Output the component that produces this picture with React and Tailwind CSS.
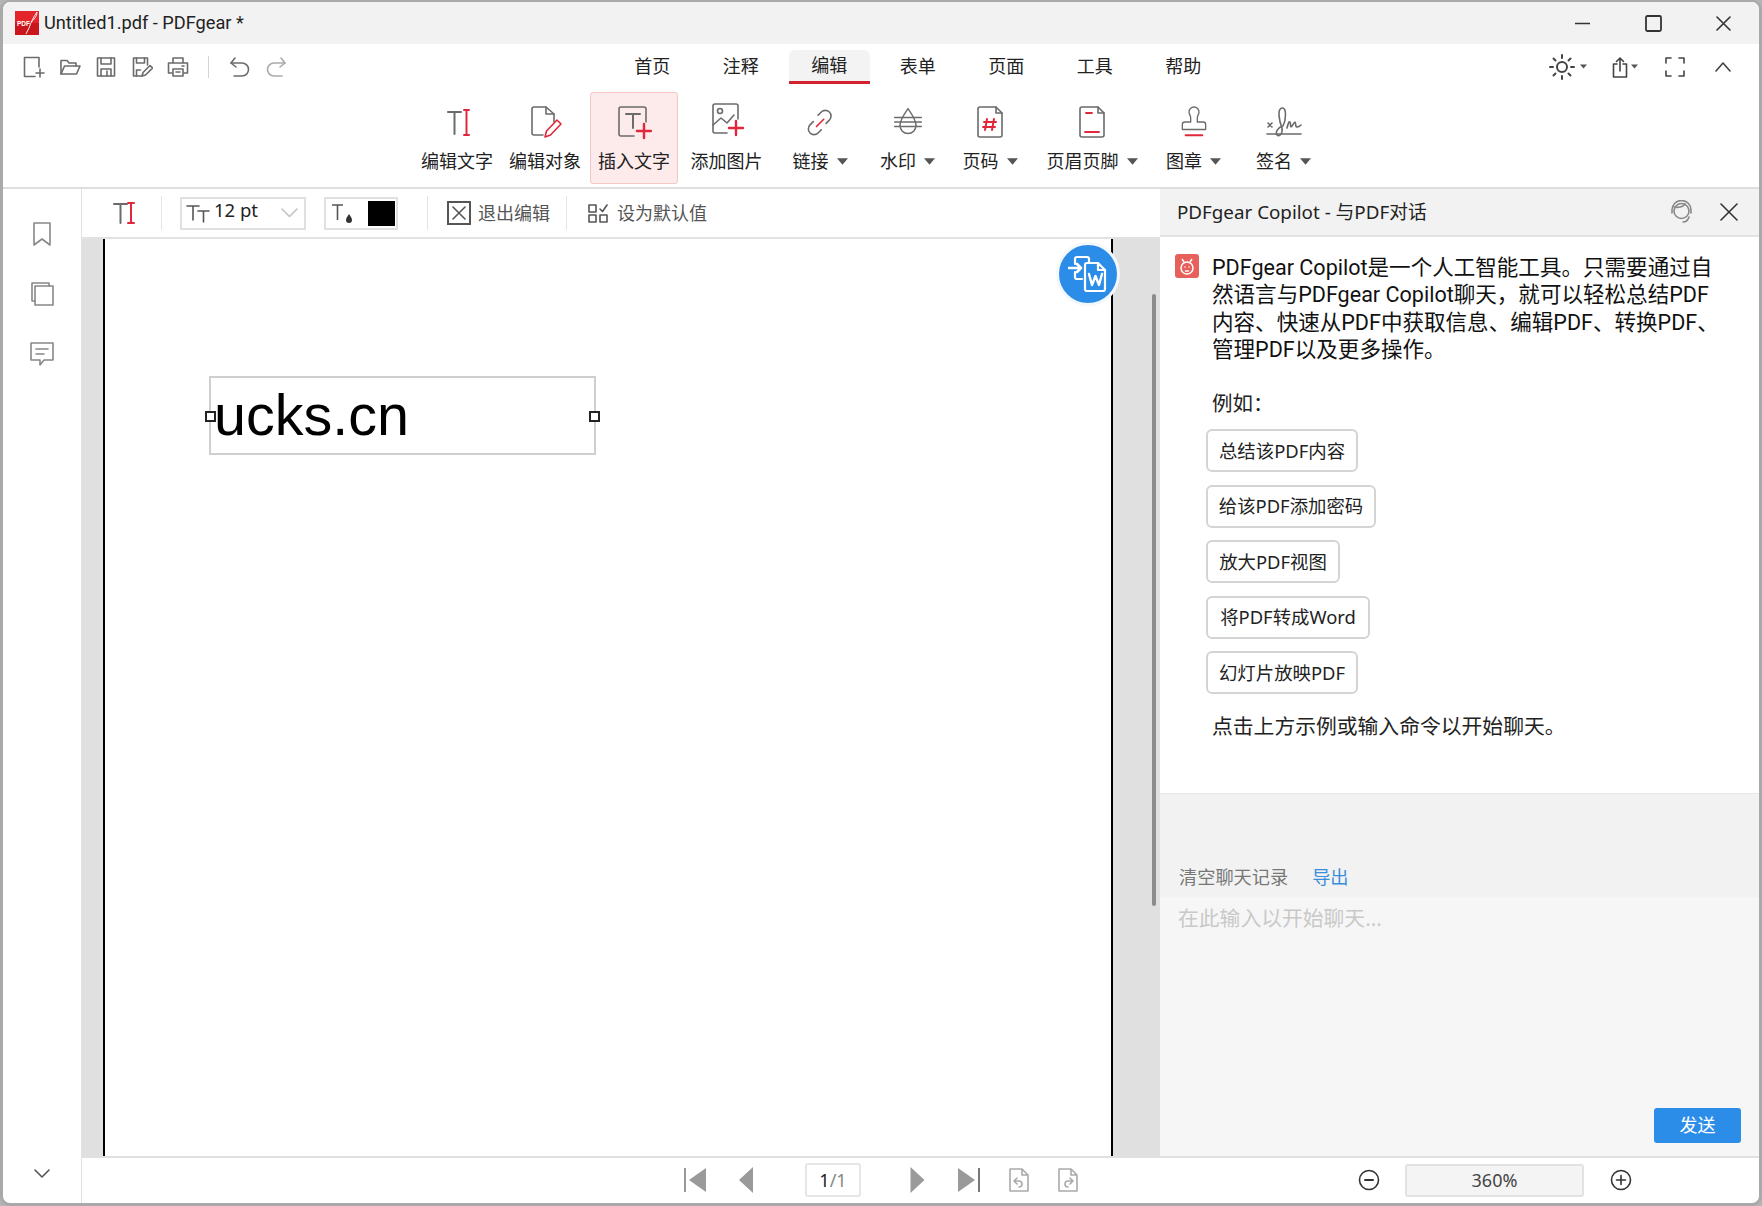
import { useState } from 'react'

const RED = '#e0283a'
const GRAY = '#6b6b6b'

const Svg = ({ w, h = w, vb, children, className = '' }) => (
  <svg width={w} height={h} viewBox={vb || `0 0 ${w} ${h}`} fill="none" stroke={GRAY} strokeWidth="1.6" strokeLinecap="round" strokeLinejoin="round" className={`shrink-0 ${className}`}>
    {children}
  </svg>
)

const Caret = ({ s = 'big' }) => (
  <svg width={s === 'big' ? 11 : 7} height={s === 'big' ? 7 : 5} viewBox="0 0 10 6" className="shrink-0">
    <path d="M0 0h10L5 6z" fill="#555" />
  </svg>
)

const Logo = () => (
  <svg width="24" height="24" viewBox="0 0 24 24" className="shrink-0">
    <rect width="24" height="24" fill="#e3242b" />
    <rect x="0" y="12" width="24" height="12" fill="#c9161d" />
    <text x="2" y="14.5" fontSize="6.5" fontWeight="700" fill="#fff" fontFamily="Liberation Sans, sans-serif">PDF</text>
    <path d="M22 1c-3 4-6 10-8 16l-3 6M22 1c0 4-3 8-6 10" stroke="#fff" strokeWidth="0.9" fill="none" />
  </svg>
)

const quick = [
  <Svg w={22} key="new"><path d="M16 11V1.5H1.5v19H12" /><path d="M17 13v8M13 17h8" /></Svg>,
  <Svg w={22} key="open"><path d="M2 18V4.5h6l2 2.5h7v3" /><path d="M2 18l3.5-8H21l-3.5 8z" /></Svg>,
  <Svg w={22} key="save"><path d="M2.500 2h17v18h-17z" /><path d="M6 2v6h10V2M6 20v-7h10v7M12 15v5" /></Svg>,
  <Svg w={22} key="saveas"><path d="M11 20H2.500V2h14v7" /><path d="M5.500 2v5h8V2M5.500 20v-6h4" /><path d="M11 20l1-3.500 7-7 2.500 2.500-7 7z" /></Svg>,
  <Svg w={22} key="print"><path d="M6 7V2h10v5M5 17H1.500V7h19v10H17" /><path d="M6 13h10v7H6zM9 16h4M15 10h2" /></Svg>,
]

const tabs = ['首页', '注释', '编辑', '表单', '页面', '工具', '帮助']

const ribbon = [
  { label: '编辑文字', w: 'w-[86px]', icon: <Svg w={36} vb="0 0 36 36"><path d="M9 8h13M15.500 8v22" strokeWidth="2" /><path d="M25 6h5M27.500 6v25M25 31h5" stroke={RED} strokeWidth="2" /></Svg> },
  { label: '编辑对象', w: 'w-[90px]', icon: <Svg w={36} vb="0 0 36 36"><path d="M16 31H7a2 2 0 0 1-2-2V5a2 2 0 0 1 2-2h12l8 7v8" /><path d="M19 3v7h8" /><path d="M18 33l1.500-6L30 16l4 4-10.500 11z" stroke={RED} /></Svg> },
  { label: '插入文字', w: 'w-[88px]', active: true, icon: <Svg w={36} vb="0 0 36 36"><path d="M18 32H5a2 2 0 0 1-2-2V5a2 2 0 0 1 2-2h23a2 2 0 0 1 2 2v13" /><path d="M10 10h14M17 10v14" strokeWidth="2" /><path d="M28 20v14M21 27h14" stroke={RED} strokeWidth="2.400" /></Svg> },
  { label: '添加图片', w: 'w-[97px]', up: true, icon: <Svg w={36} vb="0 0 36 36"><path d="M18 32H6a2 2 0 0 1-2-2V5a2 2 0 0 1 2-2h21a2 2 0 0 1 2 2v13" /><circle cx="11" cy="10" r="2.500" /><path d="M4 24l8-7 6 5 7-8" /><path d="M27 20v14M20 27h14" stroke={RED} strokeWidth="2.400" /></Svg> },
  { label: '链接', w: 'w-[90px]', caret: true, icon: <Svg w={29} vb="0 0 36 36"><path d="M15 9l4-4a6.500 6.500 0 0 1 10 10l-4 4" strokeWidth="2" /><path d="M19 27l-4 4A6.500 6.500 0 0 1 5 21l4-4" strokeWidth="2" /><path d="M13 23l9-9" stroke={RED} strokeWidth="2" /></Svg> },
  { label: '水印', w: 'w-[85px]', caret: true, icon: <Svg w={32} vb="0 0 36 36"><path d="M3 13h30M3 18h30M3 23h30" /><path d="M18 3c-4 6-9 12-9 19a9 9 0 0 0 18 0c0-7-5-13-9-19z" /></Svg> },
  { label: '页码', w: 'w-[80px]', caret: true, icon: <Svg w={36} vb="0 0 36 36"><path d="M24 3H8a2 2 0 0 0-2 2v26a2 2 0 0 0 2 2h20a2 2 0 0 0 2-2V9z" /><path d="M24 3v6h6" /><path d="M15 15l-2 11M22 15l-2 11M12 18h12M11 23h12" stroke={RED} strokeWidth="2" /></Svg> },
  { label: '页眉页脚', w: 'w-[124px]', caret: true, icon: <Svg w={36} vb="0 0 36 36"><path d="M24 3H8a2 2 0 0 0-2 2v26a2 2 0 0 0 2 2h20a2 2 0 0 0 2-2V9z" /><path d="M24 3v6h6" /><path d="M12 9h6M11 28h14" stroke={RED} strokeWidth="1.800" /></Svg> },
  { label: '图章', w: 'w-[79px]', caret: true, icon: <Svg w={30} h={32} vb="0 0 36 38"><path d="M14 14c0-3-2-4-2-7a6 6 0 0 1 12 0c0 3-2 4-2 7v5h7a3 3 0 0 1 3 3v6H4v-6a3 3 0 0 1 3-3h7z" /><path d="M8 35h20" stroke={RED} strokeWidth="2.400" /></Svg> },
  { label: '签名', w: 'w-[101px]', caret: true, icon: <Svg w={36} vb="0 0 36 36"><path d="M1 30h34" /><path d="M2 19l4 4M6 19l-4 4" /><path d="M17 22c3-6 4-19-1-18-5 1-3 12 0 20 1 6-3 9-5 7-2-3 1-7 5-9" /><path d="M21 24c1-4 2-7 3-6 1 1 0 5 1 5s3-5 4-5 0 5 2 5 3-1 4-2" /></Svg> },
]

const examples = [
  { text: '总结该PDF内容', w: 'w-[152px]' },
  { text: '给该PDF添加密码', w: 'w-[170px]' },
  { text: '放大PDF视图', w: 'w-[134px]' },
  { text: '将PDF转成Word', w: 'w-[164px]' },
  { text: '幻灯片放映PDF', w: 'w-[152px]' },
]

const Sep = ({ className = '' }) => <div className={`w-px h-[34px] bg-[#e4e4e4] shrink-0 ${className}`} />

const Tools = () => (
  <svg width="22" height="24" viewBox="0 0 22 24" fill="none" strokeLinecap="round" className="shrink-0">
    <path d="M1 3h13M7.500 3v19" stroke={GRAY} strokeWidth="2" />
    <path d="M15 2h6M18 2v20M15 22h6" stroke={RED} strokeWidth="2" />
  </svg>
)

export default function App() {
  const [zoom] = useState('360%')

  return (
    <div className="w-[1762px] h-[1206px] bg-[#b4b4b4] font-['Noto_Sans','Noto_Sans_CJK_SC',sans-serif] text-[#222]">
      <div className="w-full h-full flex flex-col rounded-[10px] overflow-hidden border-x-[3px] border-t-[2px] border-b-[3px] border-[#a9a9a9] bg-white">
        {/* title bar */}
        <div className="h-[42px] shrink-0 bg-[#f2f2f2] flex items-center pl-[12px] pr-[28px]">
          <Logo />
          <span className="ml-[5px] text-[18.200px] font-['Roboto',sans-serif]">Untitled1.pdf - PDFgear *</span>
          <div className="ml-auto flex items-center">
            <Svg w={15}><path d="M0 7.500h15" stroke="#333" /></Svg>
            <Svg w={17} className="ml-[55px]"><rect x="1" y="1" width="15" height="15" rx="1.500" stroke="#333" strokeWidth="1.800" /></Svg>
            <Svg w={15} className="ml-[54px]"><path d="M1 1l13 13M14 1L1 14" stroke="#333" strokeWidth="1.600" /></Svg>
          </div>
        </div>

        {/* menu + ribbon */}
        <div className="h-[145px] shrink-0 flex flex-col border-b-2 border-[#dedede]">
          <div className="h-[43px] pt-[2px] flex items-center">
            <div className="flex items-center gap-[14px] pl-[20px]">{quick}</div>
            <div className="w-px h-[22px] bg-[#d4d4d4] ml-[19px]" />
            <Svg w={22} className="ml-[20px]"><path d="M6 2L2 7l5 4" /><path d="M2 7h11a6 6 0 0 1 0 13H5" /></Svg>
            <Svg w={22} className="ml-[14px]"><g stroke="#aaa"><path d="M16 2l4 5-5 4" /><path d="M20 7H9a6 6 0 0 0 0 13h8" /></g></Svg>
            <div className="flex ml-[321px]">
              {tabs.map((t) => (
                <div key={t} className="w-[88.500px] px-[3.500px] shrink-0">
                  <div className={`h-[34px] flex items-center justify-center text-[18px] rounded-t-md ${t === '编辑' ? 'bg-[#f3f3f3] border-b-[3px] border-[#d3222f]' : ''}`}>{t}</div>
                </div>
              ))}
            </div>
            <div className="ml-auto flex items-center pr-[28px]">
              <Svg w={26}><circle cx="13" cy="13" r="5" strokeWidth="2" stroke="#444" /><path d="M13 1v3M13 22v3M1 13h3M22 13h3M4.500 4.500l2 2M19.500 19.500l2 2M4.500 21.500l2-2M19.500 6.500l2-2" strokeWidth="2" stroke="#444" /></Svg>
              <span className="ml-[5px]"><Caret s="small" /></span>
              <Svg w={16} h={22} className="ml-[25px]"><path d="M5 8H1.500v13h13V8H11M8 15V2M4.500 5.500L8 2l3.500 3.500" stroke="#444" /></Svg>
              <span className="ml-[3px]"><Caret s="small" /></span>
              <Svg w={20} className="ml-[27px]"><path d="M1 6V1h5M14 1h5v5M19 14v5h-5M6 19H1v-5" stroke="#444" /></Svg>
              <Svg w={16} h={10} className="ml-[30px]"><path d="M1 9l7-8 7 8" stroke="#444" /></Svg>
            </div>
          </div>
          <div className="flex pl-[411px] pt-[5px]">
            {ribbon.map((r) => (
              <div key={r.label} className={`${r.w} h-[92px] shrink-0 flex flex-col items-center rounded-[3px] border ${r.active ? 'bg-[#fdeaea] border-[#f5c6c6]' : 'border-transparent'}`}>
                <div className={`h-[36px] flex items-center ${r.up ? 'mt-[8px]' : 'mt-[11px]'}`}>{r.icon}</div>
                <div className={`flex items-center gap-[8px] text-[18px] leading-[26px] whitespace-nowrap ${r.up ? 'mt-[11px]' : 'mt-[8px]'}`}>
                  {r.label}
                  {r.caret && <Caret />}
                </div>
              </div>
            ))}
          </div>
        </div>

        <div className="flex-1 flex min-h-0">
          {/* left rail */}
          <div className="w-[79px] shrink-0 flex flex-col items-center pt-[33px] pb-[24px] border-r border-[#e2e2e2]">
            <Svg w={20} h={24}><path d="M2 1h16v22l-8-6-8 6z" stroke="#888" /></Svg>
            <Svg w={24} className="mt-[36px]"><path d="M19 4V1H2v18h3" stroke="#888" /><path d="M5 4h18v19H5z" stroke="#888" /></Svg>
            <Svg w={24} className="mt-[36px]"><path d="M1 1h22v17h-9l-4 5v-5H1z" stroke="#888" /><path d="M6 7h12M6 12h8" stroke="#888" /></Svg>
            <Svg w={16} h={10} className="mt-auto"><path d="M1 1l7 7 7-7" stroke="#555" /></Svg>
          </div>

          <div className="flex-1 flex flex-col min-w-0">
            <div className="flex-1 flex min-h-0">
              {/* document column */}
              <div className="w-[1078px] shrink-0 flex flex-col">
                <div className="h-[50px] shrink-0 flex items-center border-b-2 border-[#e2e2e2]">
                  <div className="ml-[31px]"><Tools /></div>
                  <Sep className="ml-[26px]" />
                  <div className="ml-[18px] w-[126px] h-[33px] border-2 border-[#e0e0e0] flex items-center pl-[4px] shrink-0">
                    <Svg w={24} h={22}><path d="M1 4h12M7 4v14M12 9h11M17.500 9v11" stroke="#555" /></Svg>
                    <span className="ml-[4px] text-[18.500px] leading-[20px] -mt-[6px]">12 pt</span>
                    <Svg w={17} h={10} className="ml-[23px]"><path d="M1 1l7.500 7.500L16 1" stroke="#c4c4c4" /></Svg>
                  </div>
                  <div className="ml-[18px] w-[74px] h-[33px] border-2 border-[#e0e0e0] flex items-center pl-[5px] shrink-0">
                    <svg width="24" height="24" viewBox="0 0 24 24" fill="none" className="shrink-0"><path d="M1 4h11M6.500 4v15" stroke="#555" strokeWidth="1.600" /><path d="M18 13c-2 3-3 4-3 6a3 3 0 0 0 6 0c0-2-1-3-3-6z" fill="#333" /></svg>
                    <div className="ml-[13px] w-[27px] h-[25px] bg-black" />
                  </div>
                  <Sep className="ml-[29px]" />
                  <div className="ml-[19px] w-[24px] h-[24px] border-2 border-[#555] flex items-center justify-center shrink-0">
                    <Svg w={14}><path d="M1 1l12 12M13 1L1 13" stroke="#555" /></Svg>
                  </div>
                  <span className="ml-[7px] text-[18px] text-[#555] whitespace-nowrap">退出编辑</span>
                  <Sep className="ml-[16px]" />
                  <Svg w={20} className="ml-[21px]"><path d="M1 2h7v7H1zM1 12h7v7H1zM12 12h7v7h-7zM12 6l2.500 2.500L19 2" stroke="#555" /></Svg>
                  <span className="ml-[9px] text-[18px] text-[#555] whitespace-nowrap">设为默认值</span>
                </div>

                <div className="flex-1 min-h-0 bg-[#e0e0e0] pl-[21px] pr-[47px] relative">
                  <div className="h-full bg-white border-x-2 border-black relative">
                    {/* selected text box on the page */}
                    <div className="absolute left-[104px] top-[137px] w-[387px] h-[79px] border-2 border-[#cfcfcf] flex items-center">
                      <span className="ml-[3px] font-['Liberation_Sans',sans-serif] text-[57.500px] leading-none text-black">ucks.cn</span>
                      <div className="absolute -left-[6px] top-[33px] w-[11px] h-[11px] bg-white border-2 border-[#222]" />
                      <div className="absolute -right-[6px] top-[33px] w-[11px] h-[11px] bg-white border-2 border-[#222]" />
                    </div>
                  </div>
                  <div className="absolute left-[974px] top-[3px] w-[64px] h-[64px] rounded-full bg-[#2b8de8] border-[3px] border-[#f4f8fc] flex items-center justify-center">
                    <svg width="40" height="38" viewBox="0 0 40 38" fill="none" stroke="#fff" strokeWidth="2.200" strokeLinecap="round" strokeLinejoin="round">
                      <path d="M7 9V4a2 2 0 0 1 2-2h10a2 2 0 0 1 2 2v3" />
                      <path d="M7 17v5a2 2 0 0 0 2 2h5" />
                      <path d="M1 13h12M9 9l4 4-4 4" strokeWidth="2.600" />
                      <path d="M17 10a2 2 0 0 1 2-2h11l7 7v19a2 2 0 0 1-2 2H19a2 2 0 0 1-2-2z" fill="#2b8de8" />
                      <path d="M30 8v7h7" />
                      <path d="M21 19l3 11 3.500-9 3.500 9 3-11" strokeWidth="2.400" />
                    </svg>
                  </div>
                </div>
              </div>

              {/* copilot panel */}
              <div className="flex-1 flex flex-col min-w-0 relative">
                <div className="h-[48px] shrink-0 bg-[#f2f2f2] flex items-center pl-[17px] pr-[21px] border-b-2 border-[#e2e2e2]">
                  <span className="text-[18.800px]">PDFgear Copilot - 与PDF对话</span>
                  <Svg w={25} className="ml-auto"><circle cx="12.500" cy="11" r="7.500" stroke="#888" /><path d="M3 13V10a9.500 9.500 0 0 1 19 0v3M20 17c-1 3-3 5-6 5M5 7c4 1 9 0 11-3" stroke="#888" /></Svg>
                  <Svg w={18} className="ml-[26px]"><path d="M1 1l16 16M17 1L1 17" stroke="#333" /></Svg>
                </div>
                <div className="flex-1 min-h-0 flex flex-col px-[15px] pt-[17px]">
                  <div className="flex">
                    <div className="w-[24px] h-[24px] rounded-[3px] bg-[#e8605c] flex items-center justify-center shrink-0">
                      <svg width="16" height="18" viewBox="0 0 16 18" fill="none" stroke="#fff" strokeWidth="1.500"><circle cx="8" cy="11" r="6" /><path d="M3 2l2 3M13 2l-2 3" /><path d="M6 10h.01M10 10h.01M6.500 14h3" strokeLinecap="round" /></svg>
                    </div>
                    <div className="ml-[13px] font-['Roboto','Noto_Sans_CJK_SC',sans-serif] text-[21.550px] leading-[27.300px] whitespace-nowrap text-[#111]">
                      PDFgear Copilot是一个人工智能工具。只需要通过自<br />
                      然语言与PDFgear Copilot聊天，就可以轻松总结PDF<br />
                      内容、快速从PDF中获取信息、编辑PDF、转换PDF、<br />
                      管理PDF以及更多操作。
                    </div>
                  </div>
                  <div className="ml-[37px] mt-[27px] text-[20.500px] leading-[27px]">例如：</div>
                  <div className="ml-[31px] mt-[12px] flex flex-col gap-[12.500px]">
                    {examples.map((e) => (
                      <div key={e.text} className={`${e.w} h-[43px] rounded-[6px] border-2 border-[#d4d4d4] flex items-center justify-center text-[18.400px] whitespace-nowrap`}>{e.text}</div>
                    ))}
                  </div>
                  <div className="ml-[37px] mt-[18px] text-[20.800px] leading-[28px]">点击上方示例或输入命令以开始聊天。</div>
                </div>
                <div className="h-[104px] shrink-0 bg-[#f2f2f2] border-t border-[#e6e6e6] flex items-end pl-[19px] pb-[6px] text-[18.200px]">
                  <span className="text-[#777]">清空聊天记录</span>
                  <span className="ml-[24px] text-[#3a8edb]">导出</span>
                </div>
                <div className="h-[259px] shrink-0 bg-[#f6f6f6] flex flex-col pl-[18px] pr-[18px] pt-[7px] pb-[13px]">
                  <span className="text-[20.800px] leading-[28px] text-[#c9c9c9]">在此输入以开始聊天...</span>
                  <div className="mt-auto ml-auto w-[87px] h-[35px] rounded-[3px] bg-[#2b8de8] flex items-center justify-center text-white text-[18px]">发送</div>
                </div>
                {/* scrollbar thumb of the document view */}
                <div className="absolute -left-[8px] top-[105px] w-[4px] h-[612px] bg-[#8c8c8c] rounded-full" />
              </div>
            </div>

            {/* status bar */}
            <div className="h-[47px] shrink-0 flex items-center pb-[1px] border-t-2 border-[#e0e0e0]">
              <svg width="22" height="24" viewBox="0 0 22 24" className="ml-[602px] shrink-0"><path d="M1 0v24" stroke="#999" strokeWidth="2" /><path d="M22 0v24L5 12z" fill="#9a9a9a" /></svg>
              <svg width="14" height="26" viewBox="0 0 14 26" className="ml-[33px] shrink-0"><path d="M14 0v26L0 13z" fill="#9a9a9a" /></svg>
              <div className="ml-[52px] w-[56px] h-[34px] rounded-[3px] border-2 border-[#e6e6e6] flex items-center justify-center text-[18px] shrink-0">1<span className="text-[#888]">/1</span></div>
              <svg width="15" height="26" viewBox="0 0 14 26" className="ml-[49px] shrink-0"><path d="M0 0v26l14-13z" fill="#9a9a9a" /></svg>
              <svg width="22" height="24" viewBox="0 0 22 24" className="ml-[33px] shrink-0"><path d="M21 0v24" stroke="#777" strokeWidth="2" /><path d="M0 0v24l17-12z" fill="#9a9a9a" /></svg>
              <Svg w={22} h={24} className="ml-[28px]"><g stroke="#aaa"><path d="M14 1H2v22h18V7zM14 1v6h6" /><path d="M9 10l-3 3 3 3M6 13h5a3 3 0 0 1 3 3 3 3 0 0 1-3 3" /></g></Svg>
              <Svg w={22} h={24} className="ml-[27px]"><g stroke="#aaa"><path d="M14 1H2v22h18V7zM14 1v6h6" /><path d="M13 10l3 3-3 3M16 13h-5a3 3 0 0 0-3 3 3 3 0 0 0 3 3" /></g></Svg>
              <Svg w={22} className="ml-[279px]"><circle cx="11" cy="11" r="9.500" stroke="#333" /><path d="M7 11h8" stroke="#333" strokeWidth="2" /></Svg>
              <div className="ml-[25px] w-[179px] h-[33px] rounded-[3px] bg-[#f4f4f4] border-2 border-[#e2e2e2] flex items-center justify-center text-[18px] text-[#444] shrink-0">{zoom}</div>
              <Svg w={22} className="ml-[26px]"><circle cx="11" cy="11" r="9.500" stroke="#333" /><path d="M6.500 11h9M11 6.500v9" stroke="#333" /></Svg>
            </div>
          </div>
        </div>
      </div>
    </div>
  )
}
